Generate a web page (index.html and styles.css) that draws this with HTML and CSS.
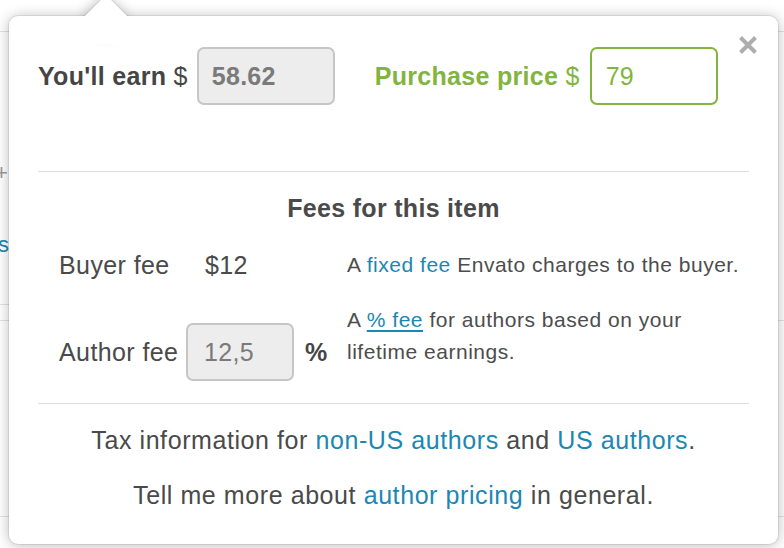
FILE: index.html
```html
<!DOCTYPE html>
<html lang="en">
<head>
  <title>Author pricing</title>
  <meta charset="utf-8">
  <meta name="viewport" content="width=device-width, initial-scale=1">
  <link rel="stylesheet" href="styles.css">
</head>
<body>
  <div class="page">
    <div class="page__head"></div>
    <div class="page__body">
      <span class="page__plus">+</span>
      <a class="page__link" href="#">s</a>
      <span class="page__rule"></span>
    </div>
    <div class="page__row"></div>
  </div>

  <div class="pricing">
    <button class="pricing__close" aria-label="Close">
      <svg width="20" height="20" viewBox="0 0 20 20">
        <path d="M2.5 2.5l15 15M17.5 2.5l-15 15" stroke="#adadad" stroke-width="4"/>
      </svg>
    </button>

    <div class="pricing__prices">
      <label class="pricing__price">
        <span class="pricing__label">You'll earn <span class="pricing__currency">$</span></span>
        <input class="pricing__input pricing__input--earn" value="58.62" readonly>
      </label>
      <label class="pricing__price pricing__price--purchase">
        <span class="pricing__label">Purchase price <span class="pricing__currency">$</span></span>
        <input class="pricing__input pricing__input--purchase" value="79">
      </label>
    </div>

    <hr class="pricing__divider">

    <h2 class="pricing__title">Fees for this item</h2>

    <div class="fees">
      <div class="fees__row">
        <span class="fees__name">Buyer fee</span>
        <span class="fees__value">$12</span>
        <span class="fees__unit"></span>
        <p class="fees__text">A <a href="#">fixed fee</a> Envato charges to the buyer.</p>
      </div>
      <div class="fees__row fees__row--author">
        <span class="fees__name">Author fee</span>
        <input class="pricing__input fees__input" value="12,5" readonly>
        <span class="fees__unit">%</span>
        <p class="fees__text">A <a class="fees__underline" href="#">% fee</a> for authors based on your lifetime earnings.</p>
      </div>
    </div>

    <hr class="pricing__divider pricing__divider--bottom">

    <p class="pricing__note">Tax information for <a href="#">non-US authors</a> and <a href="#">US authors</a>.</p>
    <p class="pricing__note pricing__note--last">Tell me more about <a href="#">author pricing</a> in general.</p>
  </div>
</body>
</html>
```

FILE: styles.css
```css
*, *::before, *::after {
  margin: 0;
  padding: 0;
  box-sizing: border-box;
}

body {
  position: relative;
  width: 784px;
  height: 548px;
  overflow: hidden;
  font-family: "Liberation Sans", Arial, sans-serif;
  background-color: #ffffff;
  color: #4a4a4a;
}

a {
  color: #1b87b2;
  text-decoration: none;
}

/* page behind the popover */

.page__head {
  height: 32px;
  border-bottom: 1px solid #e2e2e2;
}

.page__body {
  display: flex;
  flex-direction: column;
  height: 289px;
  border-bottom: 1px solid #e2e2e2;
  font-size: 22px;
  line-height: 32px;
}

.page__plus {
  margin: 125px 0 0 -5px;
  color: #9a9a9a;
}

.page__link {
  margin: 40px 0 0 -2px;
}

.page__rule {
  width: 40px;
  margin-top: 43px;
  border-top: 1px solid #e2e2e2;
}

.page__row {
  height: 196px;
  border-bottom: 1px solid #e2e2e2;
}

/* popover */

.pricing {
  position: absolute;
  top: 16px;
  left: 9px;
  z-index: 1;
  width: 769px;
  padding: 31px 29px 33px;
  border-radius: 9px;
  background-color: #ffffff;
  box-shadow: 0 0 0 1px rgba(0, 0, 0, .07), 0 1px 14px rgba(0, 0, 0, .28);
  font-size: 25px;
  letter-spacing: 0.58px;
}

.pricing::before {
  content: "";
  position: absolute;
  top: -15px;
  left: 82px;
  width: 30px;
  height: 30px;
  transform: rotate(45deg);
  background-color: #ffffff;
  box-shadow: 0 0 0 1px rgba(0, 0, 0, .07), 0 1px 14px rgba(0, 0, 0, .28);
}

.pricing::after {
  content: "";
  position: absolute;
  top: 0;
  left: 45px;
  width: 110px;
  height: 28px;
  background-color: #ffffff;
}

.pricing__close {
  position: absolute;
  top: 19px;
  right: 20px;
  display: flex;
  border: none;
  background: none;
  cursor: pointer;
}

.pricing__prices {
  display: flex;
  align-items: center;
  gap: 40px;
}

.pricing__price {
  display: flex;
  align-items: center;
  gap: 9px;
  color: #454545;
}

.pricing__price--purchase {
  gap: 10px;
  color: #82b440;
}

.pricing__label {
  font-weight: 700;
  letter-spacing: 0.3px;
}

.pricing__currency {
  font-weight: 400;
}

.pricing__input {
  height: 58px;
  padding: 0 13px;
  border: 2px solid #c6c6c6;
  border-radius: 7px;
  background-color: #ededed;
  color: #7a7a7a;
  font: inherit;
  letter-spacing: 0.3px;
  outline: none;
}

.pricing__input--earn {
  width: 138px;
  font-weight: 700;
}

.pricing__input--purchase {
  width: 128px;
  padding-left: 14px;
  border-color: #82b440;
  background-color: #ffffff;
  color: #82b440;
}

.pricing__divider {
  margin-top: 66px;
  border: none;
  border-top: 1px solid #dddddd;
}

.pricing__divider--bottom {
  margin-top: 22px;
}

.pricing__title {
  margin-top: 21px;
  font-size: 25px;
  line-height: 30px;
  font-weight: 700;
  letter-spacing: 0.3px;
  text-align: center;
  color: #4a4a4a;
}

.fees {
  display: grid;
  gap: 23px;
  margin-top: 26px;
  padding-left: 21px;
}

.fees__row {
  display: grid;
  grid-template-columns: 127px 108px 53px 1fr;
  align-items: center;
  line-height: 32px;
  letter-spacing: 0.4px;
}

.fees__row--author {
  align-items: end;
}

.fees__value {
  padding-left: 19px;
}

.fees__input {
  width: 108px;
  padding-left: 16px;
  font-weight: 400;
}

.fees__row--author .fees__name,
.fees__unit {
  line-height: 58px;
}

.fees__unit {
  padding-left: 11px;
  font-weight: 700;
  color: #454545;
}

.fees__text {
  font-size: 21px;
  letter-spacing: 0.52px;
  color: #4d4d4d;
}

.fees__row--author .fees__text {
  margin-bottom: 13px;
}

.fees__underline {
  text-decoration: underline;
  text-underline-offset: 3px;
}

.pricing__note {
  margin-top: 20px;
  line-height: 32px;
  text-align: center;
}

.pricing__note--last {
  margin-top: 23px;
}
```
